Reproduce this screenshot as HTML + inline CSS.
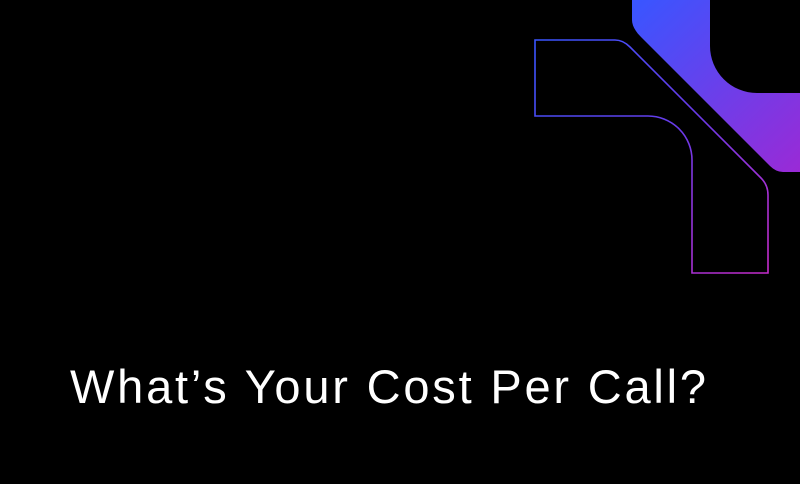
<!DOCTYPE html>
<html><head><meta charset="utf-8"><style>
html,body{margin:0;padding:0;background:#000;width:800px;height:484px;overflow:hidden}
.t{position:absolute;left:70px;top:359px;font-family:"Liberation Sans",sans-serif;font-size:47px;line-height:56px;color:#fff;white-space:nowrap;letter-spacing:2.8px}
svg{position:absolute;left:0;top:0}
</style></head><body>
<svg width="800" height="484" viewBox="0 0 800 484">
<defs>
<linearGradient id="g1" x1="640" y1="0" x2="800" y2="172" gradientUnits="userSpaceOnUse">
<stop offset="0" stop-color="#3a55ff"/><stop offset="1" stop-color="#9a2ad6"/></linearGradient>
<linearGradient id="g2" x1="540" y1="40" x2="760" y2="275" gradientUnits="userSpaceOnUse">
<stop offset="0" stop-color="#3a55ff"/><stop offset="0.5" stop-color="#6a3ae8"/><stop offset="1" stop-color="#c42ccc"/></linearGradient>
</defs>
<path d="M632,0 L710,0 L710,46 A47,47 0 0 0 757,93 L800,93 L800,172 L783,172 Q776,172 770,166 L641,37 Q632,28 632,20 Z" fill="url(#g1)"/>
<path d="M535,40 L615,40 Q623,40 630,47 L761,178 Q768,185 768,195 L768,273 L692,273 L692,160 A44,44 0 0 0 648,116 L535,116 Z" fill="none" stroke="url(#g2)" stroke-width="1.6"/>
</svg>
<div class="t">What’s Your Cost Per Call?</div>
</body></html>
